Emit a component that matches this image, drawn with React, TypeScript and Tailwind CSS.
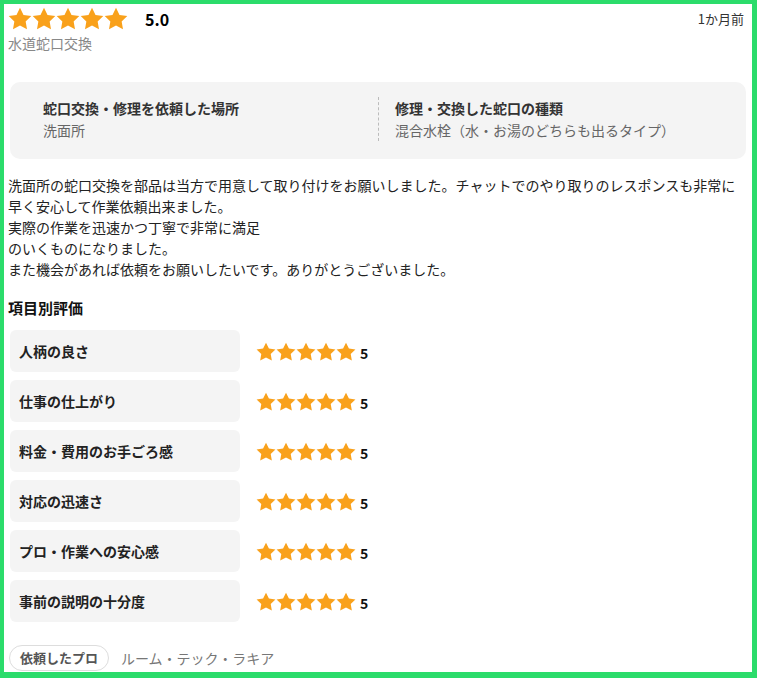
import React from "react";

const STAR = "M12 0.8l3.5 7.1 7.8 1.1-5.65 5.5 1.35 7.8L12 18.6l-7 3.7 1.35-7.8L0.7 9l7.8-1.1L12 0.8z";

function Stars({ size }: { size: number }) {
  return (
    <div className="flex items-center">
      {[0, 1, 2, 3, 4].map((i) => (
        <svg key={i} width={size} height={size} viewBox="0 0 24 24">
          <path d={STAR} fill="#f9a11b" />
        </svg>
      ))}
    </div>
  );
}

const items = [
  "人柄の良さ",
  "仕事の仕上がり",
  "料金・費用のお手ごろ感",
  "対応の迅速さ",
  "プロ・作業への安心感",
  "事前の説明の十分度",
];

export default function App() {
  return (
    <div
      className="w-[757px] h-[678px] overflow-hidden bg-white border-l-4 border-t-4 border-r-[5px] border-b-[6px] border-[#2bdc6b]"
      style={{ fontFamily: '"Noto Sans CJK JP", "Noto Sans", sans-serif' }}
    >
      <div className="px-1 pt-[3px]">
        <div className="flex justify-between items-start">
          <div className="flex items-center">
            <Stars size={24} />
            <span className="ml-[17px] text-[16px] font-bold text-black leading-5">5.0</span>
          </div>
          <span className="text-[13px] text-[#333] mr-[4px] mt-[2px] leading-5">1か月前</span>
        </div>
        <div className="text-[14px] text-[#888] leading-5 mt-[2px]">水道蛇口交換</div>

        <div className="mx-0.5 mt-[29px] rounded-[10px] bg-[#f4f4f4] pt-[15px] pb-[18px] grid grid-cols-2">
          <div className="pl-[33px]">
            <div className="text-[14px] font-bold text-[#333] leading-[22px]">蛇口交換・修理を依頼した場所</div>
            <div className="text-[14px] text-[#666] leading-[22px]">洗面所</div>
          </div>
          <div className="pl-4 border-l border-dashed border-[#bbb]">
            <div className="text-[14px] font-bold text-[#333] leading-[22px]">修理・交換した蛇口の種類</div>
            <div className="text-[14px] text-[#666] leading-[22px]">混合水栓（水・お湯のどちらも出るタイプ）</div>
          </div>
        </div>

        <div className="mt-[16px] text-[14px] leading-[21px] text-[#222] whitespace-nowrap">
          <div>洗面所の蛇口交換を部品は当方で用意して取り付けをお願いしました。チャットでのやり取りのレスポンスも非常に</div>
          <div>早く安心して作業依頼出来ました。</div>
          <div>実際の作業を迅速かつ丁寧で非常に満足</div>
          <div>のいくものになりました。</div>
          <div>また機会があれば依頼をお願いしたいです。ありがとうございました。</div>
        </div>

        <div className="mt-[17px] text-[15px] font-bold text-[#111] leading-[22px]">項目別評価</div>

        <div className="mt-[11px] flex flex-col gap-2">
          {items.map((label) => (
            <div key={label} className="flex items-center">
              <div className="ml-0.5 w-[230px] h-[42px] rounded-[6px] bg-[#f4f4f4] flex items-center pl-[9px] text-[14px] font-bold text-[#222]">
                {label}
              </div>
              <div className="ml-[16px] flex items-center mt-[2px]">
                <Stars size={20} />
                <span className="ml-[4px] text-[14px] font-bold text-[#111] mt-[2px]">5</span>
              </div>
            </div>
          ))}
        </div>

        <div className="mt-[23px] flex items-center">
          <span className="ml-px h-[26px] px-[10px] rounded-full border border-[#ddd] flex items-center text-[13px] font-bold text-[#555]">
            依頼したプロ
          </span>
          <span className="ml-[12px] text-[14px] text-[#777]">ルーム・テック・ラキア</span>
        </div>
      </div>
    </div>
  );
}
